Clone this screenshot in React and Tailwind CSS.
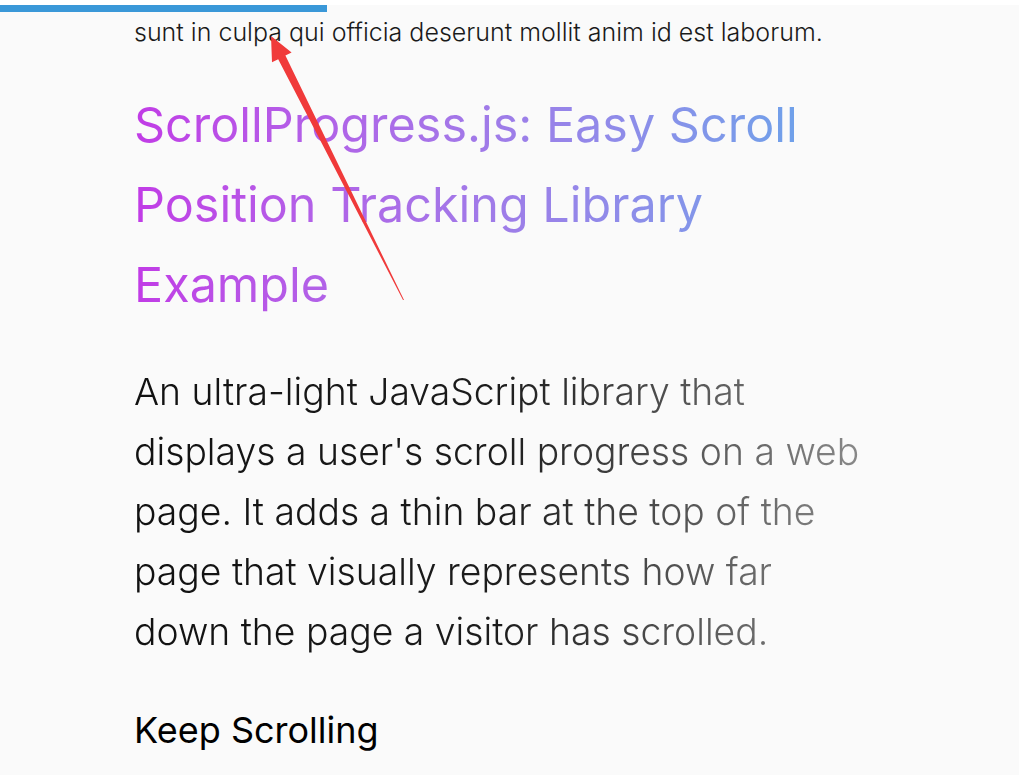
import React from "react";

function Arrow() {
  // red annotation arrow drawn over the page
  return (
    <svg
      className="absolute left-0 top-0 pointer-events-none"
      width="1019"
      height="775"
      viewBox="0 0 1019 775"
    >
      <polygon
        points="271,36 291.6,52.5 285.4,55.6 404,300 403,300 278.2,59.2 272,62.3"
        fill="#f03a3a"
      />
    </svg>
  );
}

export default function App() {
  return (
    <div className="relative w-[1019px] h-[775px] overflow-hidden bg-[#fafafa] font-['Inter','Liberation_Sans',sans-serif]">
      {/* progress bar */}
      <div className="h-[5px] bg-white" />
      <div className="h-[7px] w-[327px] bg-[#3a98d8]" />

      <main className="pl-[134px] w-[864px]">
        <p className="text-[25px] leading-[24px] font-light text-[#1a1a1a] mt-[8px]">
          sunt in culpa qui officia deserunt mollit anim id est laborum.
        </p>

        <h1 className="mt-[41px] text-[48.5px] leading-[80px] font-normal bg-gradient-to-r from-[#c13be6] to-[#5fa8ea] bg-clip-text text-transparent">
          ScrollProgress.js: Easy Scroll Position Tracking Library Example
        </h1>

        <p className="mt-[37px] text-[37.3px] leading-[60px] font-light bg-[linear-gradient(to_right,#111_0%,#1c1c1c_50%,#8a8a8a_100%)] bg-clip-text text-transparent">
          An ultra-light JavaScript library that displays a user's scroll progress on a web page. It adds a thin bar at the top of the page that visually represents how far down the page a visitor has scrolled.
        </p>

        <h2 className="mt-[48px] text-[36px] leading-[40px] font-normal text-black">
          Keep Scrolling
        </h2>
      </main>

      <Arrow />
    </div>
  );
}
